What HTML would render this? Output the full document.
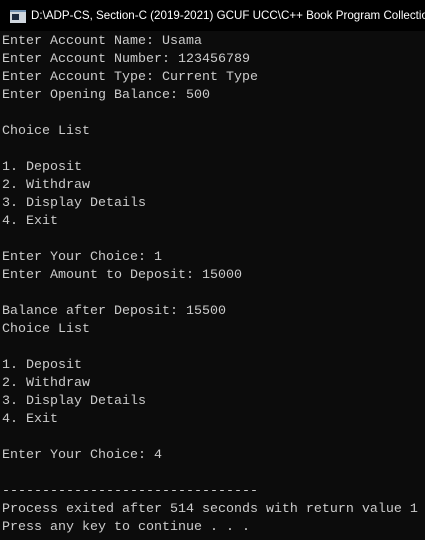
<!DOCTYPE html>
<html><head><style>
html,body{margin:0;padding:0;background:#0c0c0c;width:425px;height:540px;overflow:hidden}
.t{position:absolute;left:0;top:0;width:425px;height:31px;background:#000;color:#fff;font:11.6px "Liberation Sans",sans-serif;line-height:31px;white-space:nowrap;overflow:hidden}
.ic{position:absolute;left:10px;top:10px;width:16px;height:11px;background:#cfd6de;border-top:2px solid #6f8fb0}
.ic:after{content:"";position:absolute;left:2px;top:2px;width:7px;height:6px;background:#1a2a40}
.t span{position:absolute;left:31px}
pre{position:absolute;left:2px;top:33px;margin:0;font:13.33px "Liberation Mono",monospace;line-height:18px;color:#cccccc}
</style></head><body>
<div class="t"><div class="ic"></div><span>D:\ADP-CS, Section-C (2019-2021) GCUF UCC\C++ Book Program Collection</span></div>
<pre>Enter Account Name: Usama
Enter Account Number: 123456789
Enter Account Type: Current Type
Enter Opening Balance: 500

Choice List

1. Deposit
2. Withdraw
3. Display Details
4. Exit

Enter Your Choice: 1
Enter Amount to Deposit: 15000

Balance after Deposit: 15500
Choice List

1. Deposit
2. Withdraw
3. Display Details
4. Exit

Enter Your Choice: 4

--------------------------------
Process exited after 514 seconds with return value 1
Press any key to continue . . .</pre>
</body></html>
